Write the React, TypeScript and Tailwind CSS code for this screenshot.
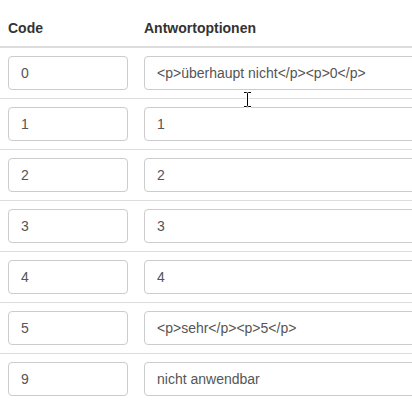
const rows = [
  { code: "0", label: "<p>überhaupt nicht</p><p>0</p>" },
  { code: "1", label: "1" },
  { code: "2", label: "2" },
  { code: "3", label: "3" },
  { code: "4", label: "4" },
  { code: "5", label: "<p>sehr</p><p>5</p>" },
  { code: "9", label: "nicht anwendbar" },
];

function Field({ value, className }: { value: string; className: string }) {
  return (
    <input
      readOnly
      value={value}
      className={`h-[34px] rounded-[4px] border border-[#ccc] bg-white px-3 py-[6px] text-[14px] leading-5 text-[#555] outline-none ${className}`}
    />
  );
}

export default function App() {
  return (
    <div
      className="relative h-[414px] w-[412px] overflow-hidden bg-white pt-[10px]"
      style={{ fontFamily: '"Liberation Sans", Arial, sans-serif' }}
    >
      <table className="w-[600px] border-collapse text-[14px] leading-5 text-[#333]">
        <thead>
          <tr className="border-b-2 border-[#ddd]">
            <th className="w-[136px] p-2 text-left font-bold">Code</th>
            <th className="p-2 text-left font-bold">Antwortoptionen</th>
          </tr>
        </thead>
        <tbody>
          {rows.map((r) => (
            <tr key={r.code} className="border-t border-[#ddd] first:border-t-0">
              <td className="p-2 align-top">
                <Field value={r.code} className="block w-[120px]" />
              </td>
              <td className="p-2 align-top">
                <Field value={r.label} className="block w-[440px]" />
              </td>
            </tr>
          ))}
        </tbody>
      </table>

      {/* text cursor */}
      <svg
        className="pointer-events-none absolute left-[243px] top-[91px]"
        width="9"
        height="17"
        viewBox="0 0 9 17"
      >
        <path
          d="M1 1.5h2.5M5.5 1.5H8M4.5 2v13M1 15.5h2.5M5.5 15.5H8"
          stroke="#fff"
          strokeWidth="3"
          fill="none"
        />
        <path
          d="M1 1.5h2.5c0.5 0 1 0.5 1 1M8 1.5H5.5c-0.5 0-1 0.5-1 1M4.5 2.5v12M1 15.5h2.5c0.5 0 1-0.5 1-1M8 15.5H5.5c-0.5 0-1-0.5-1-1"
          stroke="#000"
          strokeWidth="1"
          fill="none"
        />
      </svg>
    </div>
  );
}
